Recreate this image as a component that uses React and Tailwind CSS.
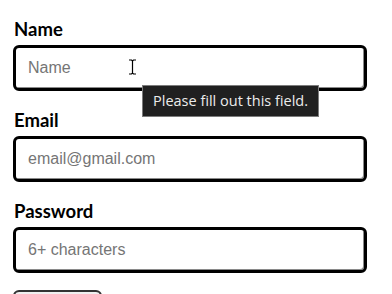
import { useState } from 'react';

const FIELDS = [
    { id: 'name', label: 'Name', type: 'text', placeholder: 'Name' },
    { id: 'email', label: 'Email', type: 'email', placeholder: 'email@gmail.com' },
    { id: 'password', label: 'Password', type: 'password', placeholder: '6+ characters' },
];

function IBeam() {
    return (
        <svg width="9" height="16" viewBox="0 0 9 16" className="absolute left-[115px] top-[14px] pointer-events-none">
            <path d="M1 1h2.5l1 1 1-1H8M4.5 2v12M1 15h2.5l1-1 1 1H8" fill="none" stroke="#000" strokeWidth="1.2" />
        </svg>
    );
}

export default function App() {
    const [values, setValues] = useState({ name: '', email: '', password: '' });

    return (
        <div className="w-[392px] h-[294px] overflow-hidden bg-white relative">
            <form className="pl-[13px] pt-[17px] w-[367px]" onSubmit={e => e.preventDefault()}>
                {FIELDS.map((f, i) => (
                    <div key={f.id} className="flex flex-col mb-[17px]">
                        <label
                            htmlFor={f.id}
                            className="h-[24px] leading-[24px] text-[18.5px] font-bold text-black pl-[1px] mb-[4px]"
                            style={{ fontFamily: "'Lato', 'Noto Sans', sans-serif" }}
                        >
                            {f.label}
                        </label>
                        <div className="relative">
                            <input
                                id={f.id}
                                type={f.type}
                                value={values[f.id]}
                                onChange={e => setValues(v => ({ ...v, [f.id]: e.target.value }))}
                                placeholder={f.placeholder}
                                className="block w-[354px] h-[46px] rounded-[6px] border-[3px] border-black bg-white pl-[12px] text-[16px] text-black placeholder:text-[#757575] outline-none shadow-[inset_-1px_-1px_0_#8a8a8a]"
                                style={{ fontFamily: "'Liberation Sans', Arial, sans-serif" }}
                            />
                            {i === 0 && <IBeam />}
                            {i === 0 && (
                                <div
                                    className="absolute left-[129px] top-[40px] z-10 h-[32px] px-[10px] flex items-center bg-[#202020] border border-[#7c7c7c] text-[#ececec] text-[14.5px] whitespace-nowrap"
                                    style={{ fontFamily: "'Open Sans', 'Noto Sans', sans-serif" }}
                                >
                                    Please fill out this field.
                                </div>
                            )}
                        </div>
                    </div>
                ))}
                <button
                    type="submit"
                    className="block w-[89px] h-[30px] rounded-[6px] border-2 border-[#333] bg-[#f0f0f0] pt-[12px] text-[12px] leading-[14px]"
                >
                    Sign up
                </button>
            </form>
        </div>
    );
}
